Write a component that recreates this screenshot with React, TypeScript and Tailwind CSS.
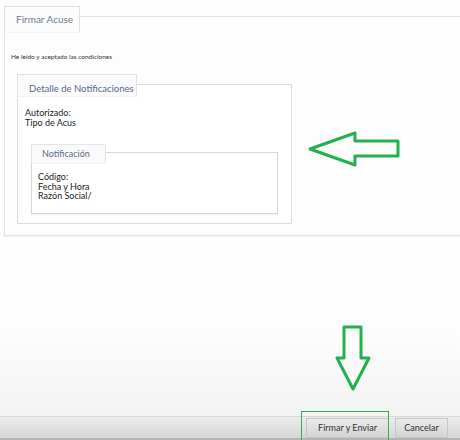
import React from "react";

const font = { fontFamily: "Lato, 'Noto Sans', sans-serif" };

const App: React.FC = () => {
	return (
		<div
			className="relative w-[460px] h-[440px] overflow-hidden bg-[#fdfdfd] flex flex-col"
			style={font}
		>
			{/* main area */}
			<div className="flex-1 bg-gradient-to-b from-[#fdfdfd] from-80% to-[#f3f3f3]">
				<div className="mt-4 ml-1 w-[470px] h-[220px] border border-[#e2e2e2] shadow-[0_1px_1px_rgba(0,0,0,0.04)]">
					{/* tab */}
					<div className="-mt-[11px] -ml-px w-[76px] h-[27px] border border-[#e0e0e0] border-b-[#f4f4f4] bg-[#fcfcfc] flex items-center pl-[11px] text-[10px] text-[#6f7c8e]">
						Firmar Acuse
					</div>
					<p className="mt-[20px] ml-[6px] text-[6.5px] leading-[8px] text-[#333]">
						He leído y aceptado las condiciones
					</p>

					{/* Detalle de Notificaciones */}
					<div className="mt-[23px] ml-[12px] w-[275px] h-[140px] border border-[#dcdcdc] bg-white">
						<div className="-mt-[11px] -ml-px w-[120px] h-[23px] border border-[#e2e2e2] border-b-[#f2f2f2] bg-[#fbfbfb] flex items-center pt-[7px] pl-[11px] text-[9.5px] text-[#586894]">
							Detalle de Notificaciones
						</div>
						<div className="mt-[11px] ml-[7px] text-[9px] leading-[9.5px] text-[#222]">
							<div>Autorizado:</div>
							<div>Tipo de Acus</div>
						</div>

						{/* Notificación */}
						<div className="mt-[25px] ml-[13px] w-[247px] h-[62px] border border-[#d8d8d8] shadow-[0_1px_1px_rgba(0,0,0,0.06)]">
							<div className="-mt-[9px] -ml-px w-[75px] h-[20px] border border-[#e4e4e4] border-b-[#f4f4f4] bg-[#fafafa] flex items-center pl-[10px] text-[9px] text-[#5a6a8a]">
								Notificación
							</div>
							<div className="mt-[8px] ml-[6px] text-[9px] leading-[9.6px] text-[#222]">
								<div>Código:</div>
								<div>Fecha y Hora</div>
								<div>Razón Social/</div>
							</div>
						</div>
					</div>
				</div>
			</div>

			{/* footer bar */}
			<div className="h-[24px] border-t border-[#d8d8d8] border-b-2 border-b-[#b4b4b4] bg-gradient-to-b from-[#ececec] to-[#d6d6d6] flex items-end justify-end pr-[12px] gap-[6px]">
				<button className="w-[83px] h-[20px] border border-[#c6c6c6] bg-gradient-to-b from-[#ebebeb] to-[#d3d3d3] text-[9px] text-[#333]">
					Firmar y Enviar
				</button>
				<button className="w-[53px] h-[20px] border border-[#c6c6c6] bg-gradient-to-b from-[#ebebeb] to-[#d3d3d3] text-[9px] text-[#333]">
					Cancelar
				</button>
			</div>

			{/* annotation: green frame round the button */}
			<div className="absolute left-[301px] top-[411px] w-[88px] h-[30px] border-[1.5px] border-[#2cb24a]" />

			{/* annotation: left arrow */}
			<svg
				className="absolute left-[300px] top-[125px]"
				width="110"
				height="50"
				viewBox="300 125 110 50"
			>
				<path
					d="M310 149 L355 133 L355 141 L398 141 L398 156 L355 156 L355 165 Z"
					fill="none"
					stroke="#22b14c"
					strokeWidth="3"
					strokeLinejoin="round"
				/>
			</svg>

			{/* annotation: down arrow */}
			<svg
				className="absolute left-[330px] top-[320px]"
				width="50"
				height="80"
				viewBox="330 320 50 80"
			>
				<path
					d="M344 327 L361 327 L361 358 L369 358 L353 389 L337 358 L344 358 Z"
					fill="none"
					stroke="#22b14c"
					strokeWidth="3"
					strokeLinejoin="round"
				/>
			</svg>
		</div>
	);
};

export default App;
